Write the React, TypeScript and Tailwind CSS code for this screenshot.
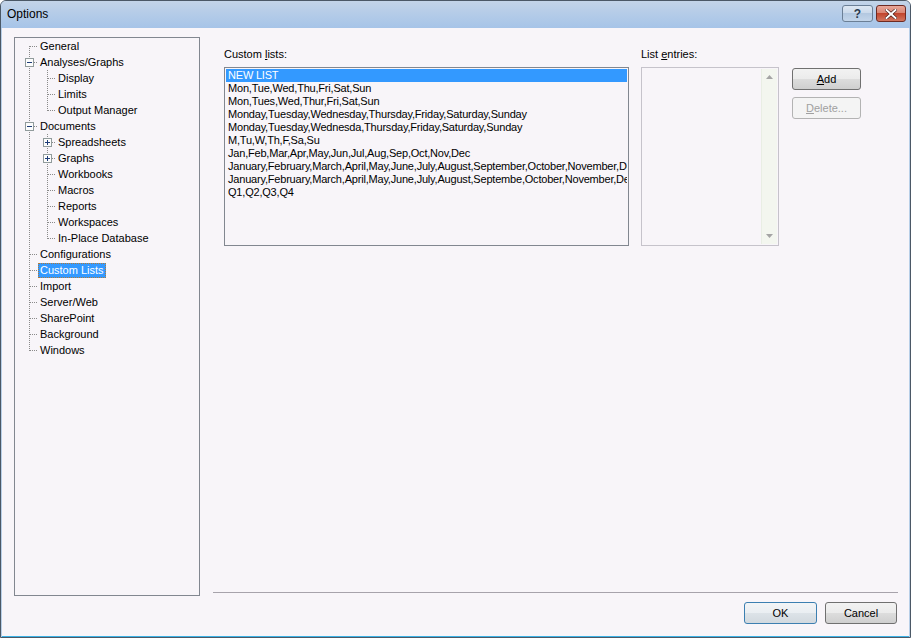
import React from "react";

type Row = {
  label: string;
  level: 0 | 1;
  box?: "plus" | "minus";
  pos: "first" | "mid" | "last";
  selected?: boolean;
};

const rows: Row[] = [
  { label: "General", level: 0, pos: "first" },
  { label: "Analyses/Graphs", level: 0, box: "minus", pos: "mid" },
  { label: "Display", level: 1, pos: "mid" },
  { label: "Limits", level: 1, pos: "mid" },
  { label: "Output Manager", level: 1, pos: "last" },
  { label: "Documents", level: 0, box: "minus", pos: "mid" },
  { label: "Spreadsheets", level: 1, box: "plus", pos: "mid" },
  { label: "Graphs", level: 1, box: "plus", pos: "mid" },
  { label: "Workbooks", level: 1, pos: "mid" },
  { label: "Macros", level: 1, pos: "mid" },
  { label: "Reports", level: 1, pos: "mid" },
  { label: "Workspaces", level: 1, pos: "mid" },
  { label: "In-Place Database", level: 1, pos: "last" },
  { label: "Configurations", level: 0, pos: "mid" },
  { label: "Custom Lists", level: 0, pos: "mid", selected: true },
  { label: "Import", level: 0, pos: "mid" },
  { label: "Server/Web", level: 0, pos: "mid" },
  { label: "SharePoint", level: 0, pos: "mid" },
  { label: "Background", level: 0, pos: "mid" },
  { label: "Windows", level: 0, pos: "last" },
];

const lists = [
  "Mon,Tue,Wed,Thu,Fri,Sat,Sun",
  "Mon,Tues,Wed,Thur,Fri,Sat,Sun",
  "Monday,Tuesday,Wednesday,Thursday,Friday,Saturday,Sunday",
  "Monday,Tuesday,Wednesda,Thursday,Friday,Saturday,Sunday",
  "M,Tu,W,Th,F,Sa,Su",
  "Jan,Feb,Mar,Apr,May,Jun,Jul,Aug,Sep,Oct,Nov,Dec",
  "January,February,March,April,May,June,July,August,September,October,November,December",
  "January,February,March,April,May,June,July,August,Septembe,October,November,December",
  "Q1,Q2,Q3,Q4",
];

const DOT = "#8a8a8a";

function PassCell() {
  return (
    <svg width="18" height="16" className="shrink-0" shapeRendering="crispEdges">
      <line x1="9.5" y1="0" x2="9.5" y2="16" stroke={DOT} strokeDasharray="1 1" />
    </svg>
  );
}

function ConnCell({ pos, box }: { pos: Row["pos"]; box?: Row["box"] }) {
  const y1 = pos === "first" ? 8 : 0;
  const y2 = pos === "last" ? 9 : 16;
  return (
    <svg width="18" height="16" className="shrink-0" shapeRendering="crispEdges">
      <line x1="9.5" y1={y1} x2="9.5" y2={y2} stroke={DOT} strokeDasharray="1 1" />
      <line x1={box ? 14 : 10} y1="8.5" x2="18" y2="8.5" stroke={DOT} strokeDasharray="1 1" />
      {box && (
        <g>
          <rect x="5.5" y="4.5" width="8" height="8" fill="#fcfcfc" stroke="#919b9c" />
          <line x1="7" y1="8.5" x2="12" y2="8.5" stroke="#1e3c78" />
          {box === "plus" && <line x1="9.5" y1="6" x2="9.5" y2="11" stroke="#1e3c78" />}
        </g>
      )}
    </svg>
  );
}

function WinButton({
  children,
  className = "",
  focused = false,
  disabled = false,
}: {
  children: React.ReactNode;
  className?: string;
  focused?: boolean;
  disabled?: boolean;
}) {
  const border = disabled
    ? "border-[#b3b3b3]"
    : focused
    ? "border-[#3c7fb1]"
    : "border-[#707070]";
  const bg = disabled
    ? "bg-[#f4f4f4]"
    : focused
    ? "bg-[linear-gradient(#f2f4f6_0%,#eaeef2_50%,#dde3e8_50%,#d2d9df_100%)]"
    : "bg-[linear-gradient(#f2f2f2_0%,#ebebeb_50%,#dddddd_50%,#cfcfcf_100%)]";
  return (
    <div
      className={`flex items-center justify-center h-[22px] rounded-[3px] border ${border} ${bg} text-[11px] ${
        disabled ? "text-[#a0a0a0]" : "text-black"
      } ${className}`}
    >
      {children}
    </div>
  );
}

export default function App() {
  return (
    <div
      className="w-[911px] h-[638px] flex flex-col border border-[#4b5866] rounded-t-[6px] bg-[#b8cfe8] overflow-hidden"
      style={{ fontFamily: '"Liberation Sans", Arial, sans-serif' }}
    >
      {/* Title bar */}
      <div className="h-[27px] shrink-0 flex items-start justify-between bg-[linear-gradient(#c3d4e8_0%,#b5cce8_45%,#a6c4e8_100%)]">
        <div className="pl-[6px] pt-[6px] text-[12px] leading-[15px] text-black">Options</div>
        <div className="flex gap-[3px] pt-[4px] pr-[4px]">
          <div className="w-[31px] h-[17px] rounded-[3px] border border-[#6b7f96] bg-[linear-gradient(#dde7f2_0%,#c9d8ea_50%,#b3c8e0_50%,#c3d5ea_100%)] flex items-center justify-center text-[12px] font-bold text-[#2a3a4e] leading-none">
            ?
          </div>
          <div className="w-[30px] h-[17px] rounded-[3px] border border-[#6e2a22] bg-[linear-gradient(#e8a79a_0%,#d8826f_50%,#c2452d_50%,#d1765f_100%)] flex items-center justify-center">
            <svg width="12" height="10" viewBox="0 0 12 10">
              <path d="M1.5 1 L10.5 9 M10.5 1 L1.5 9" stroke="#3a1410" strokeWidth="3.2" strokeLinecap="square" />
              <path d="M1.5 1 L10.5 9 M10.5 1 L1.5 9" stroke="#ffffff" strokeWidth="2" strokeLinecap="square" />
            </svg>
          </div>
        </div>
      </div>

      {/* Client */}
      <div className="flex-1 mx-[1px] border-b border-[#3cb2e6] bg-[#f8f5f9] flex pl-[12px] pt-[9px] text-[11px] text-black">
        {/* Tree */}
        <div className="w-[186px] h-[559px] shrink-0 border border-[#828790] bg-[#f8f5f9] pl-[5px]">
          {rows.map((r) => (
            <div key={r.label} className="flex items-center h-[16px]">
              {r.level === 1 && <PassCell />}
              <ConnCell pos={r.pos} box={r.box} />
              <div
                className={`h-[15px] px-[1px] leading-[13px] border whitespace-nowrap ${
                  r.selected
                    ? "bg-[#3399ff] text-white border-dotted border-[#b07a3a]"
                    : "border-transparent"
                }`}
              >
                {r.label}
              </div>
            </div>
          ))}
        </div>

        {/* Right side */}
        <div className="ml-[13px] w-[685px] flex flex-col">
          <div className="flex-1 flex pl-[11px] pt-[10px]">
            {/* Custom lists */}
            <div className="w-[405px] flex flex-col">
              <div className="h-[14px] leading-[14px] mb-[6px]">
                Custom <span className="underline">l</span>ists:
              </div>
              <div className="h-[179px] border border-[#828790] bg-[#f8f5f9] p-[1px] overflow-hidden tracking-[-0.2px]">
                <div className="h-[13px] leading-[13px] px-[2px] bg-[#3399ff] text-white whitespace-nowrap">
                  NEW LIST
                </div>
                {lists.map((l, i) => (
                  <div key={i} className="h-[13px] leading-[13px] px-[2px] whitespace-nowrap overflow-hidden">
                    {l}
                  </div>
                ))}
              </div>
            </div>

            {/* List entries */}
            <div className="ml-[12px] w-[138px] flex flex-col">
              <div className="h-[14px] leading-[14px] mb-[6px]">
                List <span className="underline">e</span>ntries:
              </div>
              <div className="h-[179px] border border-[#c6c3cb] bg-[#f8f5f9] flex justify-end p-[1px]">
                <div className="w-[16px] h-full bg-[#f3f6ef] border-l border-[#e9eee4] flex flex-col items-center justify-between py-[6px]">
                  <svg width="7" height="4" viewBox="0 0 7 4">
                    <path d="M0 4 L3.5 0 L7 4 Z" fill="#a4a4a4" />
                  </svg>
                  <svg width="7" height="4" viewBox="0 0 7 4">
                    <path d="M0 0 L3.5 4 L7 0 Z" fill="#a4a4a4" />
                  </svg>
                </div>
              </div>
            </div>

            {/* Buttons */}
            <div className="ml-[13px] w-[69px] flex flex-col pt-[21px] gap-[7px]">
              <WinButton className="w-[69px]">
                <span>
                  <span className="underline">A</span>dd
                </span>
              </WinButton>
              <WinButton className="w-[69px]" disabled>
                <span>
                  <span className="underline">D</span>elete...
                </span>
              </WinButton>
            </div>
          </div>

          {/* Separator + buttons */}
          <div className="h-px bg-[#a7a3ab]" />
          <div className="flex justify-end gap-[8px] pt-[9px] pb-[12px] pr-[1px]">
            <WinButton className="w-[73px]" focused>
              OK
            </WinButton>
            <WinButton className="w-[72px]">Cancel</WinButton>
          </div>
        </div>
      </div>
    </div>
  );
}
